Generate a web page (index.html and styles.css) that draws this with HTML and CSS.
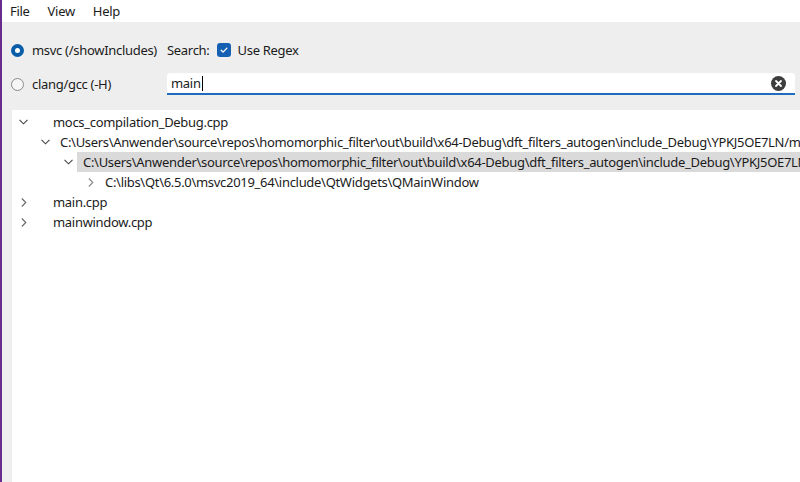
FILE: index.html
```html
<!DOCTYPE html>
<html lang="en">
<head>
<meta charset="utf-8">
<title>Include Viewer</title>
<link rel="stylesheet" href="styles.css">
</head>
<body>
<div class="window">
  <div class="menubar">
    <span class="menu-item">File</span>
    <span class="menu-item">View</span>
    <span class="menu-item">Help</span>
  </div>
  <div class="panel">
    <div class="controls">
      <div class="radio checked"><span class="radio-dot"></span><span>msvc (/showIncludes)</span></div>
      <div class="search-head">
        <span>Search:</span>
        <span class="checkbox"><svg width="14" height="14" viewBox="0 0 14 14"><path d="M4.2 7.2 L6.1 9.1 L9.9 5.1" fill="none" stroke="#fff" stroke-width="1.3" stroke-linecap="round" stroke-linejoin="round"/></svg></span>
        <span>Use Regex</span>
      </div>
      <div class="radio"><span class="radio-dot"></span><span>clang/gcc (-H)</span></div>
      <div class="search-input">
        <span class="input-text">main</span><span class="caret"></span>
        <span class="clear"><svg width="15" height="15" viewBox="0 0 15 15"><circle cx="7.5" cy="7.5" r="7.5" fill="#3d3d3d"/><path d="M5 5 L10 10 M10 5 L5 10" stroke="#fff" stroke-width="1.8" stroke-linecap="round"/></svg></span>
      </div>
    </div>
    <div class="tree">
      <div class="row l0">
        <span class="twisty open"><svg width="9" height="6" viewBox="0 0 9 6"><path d="M0.5 0.8 L4.5 4.8 L8.5 0.8" fill="none" stroke="#444" stroke-width="1.1"/></svg></span>
        <span class="label">mocs_compilation_Debug.cpp</span>
      </div>
      <div class="row l1">
        <span class="twisty open"><svg width="9" height="6" viewBox="0 0 9 6"><path d="M0.5 0.8 L4.5 4.8 L8.5 0.8" fill="none" stroke="#444" stroke-width="1.1"/></svg></span>
        <span class="label">C:\Users\Anwender\source\repos\homomorphic_filter\out\build\x64-Debug\dft_filters_autogen\include_Debug\YPKJ5OE7LN/moc_mainwindow.cpp</span>
      </div>
      <div class="row l2">
        <span class="twisty open"><svg width="9" height="6" viewBox="0 0 9 6"><path d="M0.5 0.8 L4.5 4.8 L8.5 0.8" fill="none" stroke="#444" stroke-width="1.1"/></svg></span>
        <span class="label selected">C:\Users\Anwender\source\repos\homomorphic_filter\out\build\x64-Debug\dft_filters_autogen\include_Debug\YPKJ5OE7LN/../../../../../mainwindow.h</span>
      </div>
      <div class="row l3">
        <span class="twisty"><svg width="6" height="9" viewBox="0 0 6 9"><path d="M0.8 0.5 L4.8 4.5 L0.8 8.5" fill="none" stroke="#888" stroke-width="1.1"/></svg></span>
        <span class="label">C:\libs\Qt\6.5.0\msvc2019_64\include\QtWidgets\QMainWindow</span>
      </div>
      <div class="row l0">
        <span class="twisty"><svg width="6" height="9" viewBox="0 0 6 9"><path d="M0.8 0.5 L4.8 4.5 L0.8 8.5" fill="none" stroke="#666" stroke-width="1.1"/></svg></span>
        <span class="label">main.cpp</span>
      </div>
      <div class="row l0">
        <span class="twisty"><svg width="6" height="9" viewBox="0 0 6 9"><path d="M0.8 0.5 L4.8 4.5 L0.8 8.5" fill="none" stroke="#666" stroke-width="1.1"/></svg></span>
        <span class="label">mainwindow.cpp</span>
      </div>
    </div>
  </div>
</div>
</body>
</html>
```

FILE: styles.css
```css
* { box-sizing: border-box; }
html, body {
  margin: 0;
  padding: 0;
  width: 800px;
  height: 482px;
  overflow: hidden;
}
body {
  font-family: "Noto Sans", "Open Sans", sans-serif;
  font-size: 13px;
  letter-spacing: -0.3px;
  color: #1b1b1b;
  background: #eeeeee;
}
.window {
  height: 482px;
  border-left: 2px solid #6a2b8f;
  display: flex;
  flex-direction: column;
}
.menubar {
  height: 22px;
  background: #ffffff;
  display: flex;
  align-items: center;
  gap: 18px;
  padding-left: 8px;
  flex: none;
}
.panel {
  flex: 1;
  display: flex;
  flex-direction: column;
  background: #eeeeee;
  min-height: 0;
}
.controls {
  display: grid;
  grid-template-columns: 146px 1fr;
  grid-template-rows: 22px 22px;
  row-gap: 12px;
  column-gap: 10px;
  padding: 17px 5px 15px 9px;
  flex: none;
}
.radio {
  display: flex;
  align-items: center;
  gap: 8px;
  white-space: nowrap;
}
.radio-dot {
  width: 13px;
  height: 13px;
  border-radius: 50%;
  border: 1px solid #8a8a8a;
  background: #f6f6f6;
  flex: none;
}
.radio.checked .radio-dot {
  border: 4px solid #0a5ea8;
  background: #ffffff;
}
.search-head {
  display: flex;
  align-items: center;
  gap: 7px;
  white-space: nowrap;
}
.checkbox {
  width: 14px;
  height: 14px;
  border-radius: 3px;
  background: #1660b3;
  display: flex;
  flex: none;
}
.search-input {
  background: #ffffff;
  border-bottom: 2px solid #1d6cc0;
  border-radius: 3px 3px 0 0;
  display: flex;
  align-items: center;
  padding: 0 9px 0 4px;
}
.caret {
  width: 1px;
  height: 15px;
  background: #000;
  margin-left: 1px;
}
.clear {
  margin-left: auto;
  display: flex;
}
.tree {
  flex: 1;
  background: #ffffff;
  margin-left: 10px;
  padding-top: 2px;
  overflow: hidden;
}
.row {
  height: 20px;
  display: flex;
  align-items: center;
  white-space: nowrap;
}
.twisty {
  width: 17px;
  height: 20px;
  display: flex;
  align-items: center;
  justify-content: center;
  flex: none;
}
.label {
  padding: 0 6px;
  height: 20px;
  line-height: 20px;
  flex: 1;
  overflow: hidden;
}
.label.selected { background: #dadada; }
.l0 { padding-left: 3px; }
.l0 .label { margin-left: 15px; }
.l1 { padding-left: 25px; }
.l2 { padding-left: 48px; }
.l3 { padding-left: 70px; }
```
